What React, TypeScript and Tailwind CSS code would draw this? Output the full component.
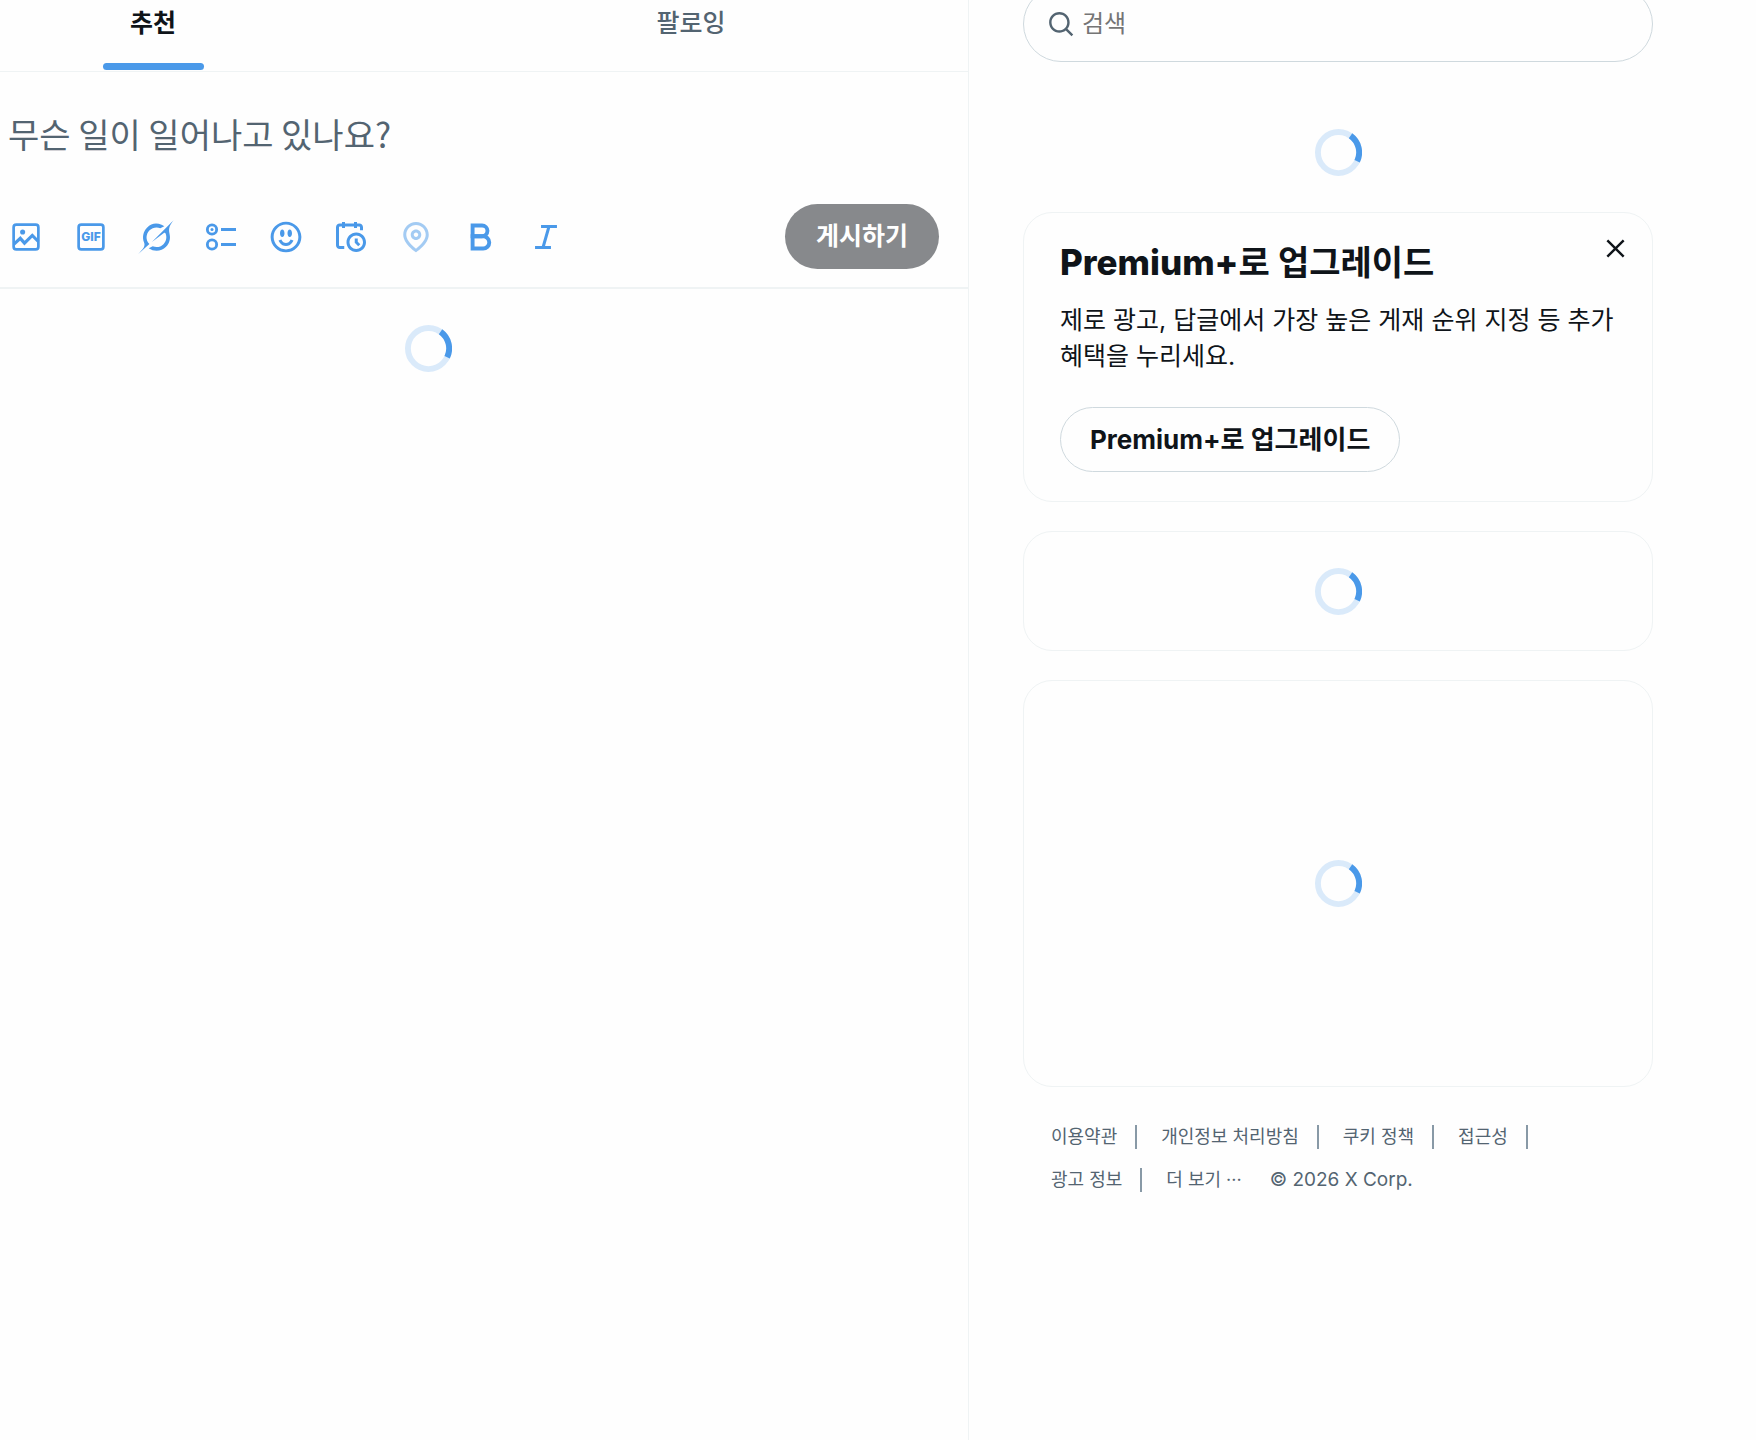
import React, { useState } from "react";

const toolbarIcons = [
  {
    label: "미디어",
    icon: (
      <g fill="none" stroke="currentColor">
        <rect x="3.75" y="3.75" width="16.5" height="16.5" rx="1.8" strokeWidth="1.8" />
        <path d="M4 16.8l4.2-3.9 2.8 3.2 5.2-5.1 4 4" strokeWidth="2.1" />
        <circle cx="9.75" cy="8.7" r="1.7" fill="currentColor" stroke="none" />
      </g>
    ),
  },
  {
    label: "GIF",
    icon: (
      <>
        <rect
          x="3.75"
          y="3.75"
          width="16.5"
          height="16.5"
          rx="1.8"
          fill="none"
          stroke="currentColor"
          strokeWidth="1.8"
        />
        <text x="12" y="14.9" textAnchor="middle" className="text-[8px] font-extrabold">
          GIF
        </text>
      </>
    ),
  },
  {
    label: "Grok",
    icon: (
      <path d="M9.27 15.29l7.978-5.897c.391-.29.95-.177 1.137.272.98 2.369.542 5.215-1.41 7.169-1.951 1.954-4.667 2.382-7.149 1.406l-2.711 1.257c3.889 2.661 8.611 2.003 11.562-.953 2.341-2.344 3.066-5.539 2.388-8.42l.006.007c-.983-4.232.242-5.924 2.75-9.383.06-.082.12-.164.179-.248l-3.301 3.305v-.01L9.267 15.292M7.623 16.723c-2.792-2.67-2.31-6.801.071-9.184 1.761-1.763 4.647-2.483 7.166-1.425l2.705-1.25a7.808 7.808 0 00-1.829-1A8.975 8.975 0 005.984 5.83c-2.533 2.536-3.33 6.436-1.962 9.764 1.022 2.487-.653 4.246-2.34 6.022-.599.63-1.199 1.259-1.682 1.925l7.62-6.815" />
    ),
  },
  {
    label: "투표",
    icon: (
      <g fill="none" stroke="currentColor">
        <circle cx="6" cy="7" r="3.1" strokeWidth="1.9" />
        <circle cx="6" cy="17" r="3.1" strokeWidth="1.9" />
        <circle cx="6" cy="7" r="1" fill="currentColor" stroke="none" />
        <path d="M12 7h10M12 17h10" strokeWidth="2" />
      </g>
    ),
  },
  {
    label: "이모티콘",
    icon: (
      <path d="M8 9.5C8 8.119 8.672 7 9.5 7S11 8.119 11 9.5 10.328 12 9.5 12 8 10.881 8 9.5zm6.5 2.5c.828 0 1.5-1.119 1.5-2.5S15.328 7 14.5 7 13 8.119 13 9.5s.672 2.5 1.5 2.5zM12 16c-2.224 0-3.021-2.227-3.051-2.316l-1.897.633c.05.15 1.271 3.684 4.949 3.684s4.898-3.533 4.949-3.684l-1.896-.638c-.033.095-.83 2.322-3.053 2.322zm10.25-4.001c0 5.652-4.598 10.25-10.25 10.25S1.75 17.652 1.75 12 6.348 1.75 12 1.75 22.25 6.348 22.25 12zm-2 0c0-4.549-3.701-8.25-8.25-8.25S3.75 7.451 3.75 12s3.701 8.25 8.25 8.25 8.25-3.701 8.25-8.25z" />
    ),
  },
  {
    label: "예약",
    icon: (
      <path d="M6 3V2h2v1h6V2h2v1h1.5C18.88 3 20 4.119 20 5.5v2h-2v-2c0-.276-.22-.5-.5-.5H16v1h-2V5H8v1H6V5H4.5c-.28 0-.5.224-.5.5v12c0 .276.22.5.5.5h3v2h-3C3.12 20 2 18.881 2 17.5v-12C2 4.119 3.12 3 4.5 3H6zm9.5 8c-2.49 0-4.5 2.015-4.5 4.5s2.01 4.5 4.5 4.5 4.5-2.015 4.5-4.5-2.01-4.5-4.5-4.5zM9 15.5C9 11.91 11.91 9 15.5 9s6.5 2.91 6.5 6.5-2.91 6.5-6.5 6.5S9 19.09 9 15.5zm5.5-2.5h2v2.086l1.71 1.707-1.42 1.414-2.29-2.293V13z" />
    ),
  },
  {
    label: "위치",
    disabled: true,
    icon: (
      <path d="M12 7c-1.93 0-3.5 1.57-3.5 3.5S10.07 14 12 14s3.5-1.57 3.5-3.5S13.93 7 12 7zm0 5c-.827 0-1.5-.673-1.5-1.5S11.173 9 12 9s1.5.673 1.5 1.5S12.827 12 12 12zm0-10c-4.687 0-8.5 3.813-8.5 8.5 0 5.967 7.621 11.116 7.945 11.332l.555.37.555-.37c.324-.216 7.945-5.365 7.945-11.332C20.5 5.813 16.687 2 12 2zm0 17.77c-1.665-1.241-6.5-5.196-6.5-9.27C5.5 6.916 8.416 4 12 4s6.5 2.916 6.5 6.5c0 4.073-4.835 8.028-6.5 9.27z" />
    ),
  },
  {
    label: "굵게",
    icon: (
      <g fill="none" stroke="currentColor" strokeWidth="2.6">
        <path d="M6.4 4.3h6.3a3.6 3.6 0 0 1 0 7.2H6.4z" />
        <path d="M6.4 11.5h7a4.1 4.1 0 0 1 0 8.2h-7z" />
      </g>
    ),
  },
  {
    label: "기울임꼴",
    icon: (
      <path
        d="M8.7 5h10.6M4.7 19h10.6M14 5l-4 14"
        fill="none"
        stroke="currentColor"
        strokeWidth="2"
      />
    ),
  },
];

const footerLinks = ["이용약관", "개인정보 처리방침", "쿠키 정책", "접근성", "광고 정보"];

function Spinner() {
  return (
    <svg role="progressbar" aria-label="로딩 중" viewBox="0 0 32 32" className="h-[47px] w-[47px]">
      <circle cx="16" cy="16" r="14" fill="none" stroke="#4a99e9" strokeWidth="4" opacity="0.2" />
      {/* about a fifth of the ring */}
      <path
        d="M24.2 4.6A14 14 0 0 1 28.7 22"
        fill="none"
        stroke="#4a99e9"
        strokeWidth="4"
      />
    </svg>
  );
}

function Tabs() {
  const [active, setActive] = useState(0);

  return (
    <nav role="tablist" className="flex h-[71px] -ml-1 mr-2">
      {["추천", "팔로잉"].map((tab, i) => (
        <button
          key={tab}
          role="tab"
          aria-selected={active === i}
          onClick={() => setActive(i)}
          className="flex flex-1 flex-col items-center justify-between pb-px"
        >
          <span
            className={
              active === i
                ? "pt-[5px] text-[25px] leading-9 font-bold text-[#0f1419]"
                : "pt-[5px] text-[25px] leading-9 font-medium text-[#536471]"
            }
          >
            {tab}
          </span>
          {active === i && <span className="h-[7px] w-[101px] rounded-full bg-[#4a99e9]" />}
        </button>
      ))}
    </nav>
  );
}

function Composer() {
  return (
    <form className="border-b-2 border-[#eff3f4] pl-[105px]" onSubmit={(e) => e.preventDefault()}>
      <input
        type="text"
        aria-label="게시물 텍스트"
        placeholder="무슨 일이 일어나고 있나요?"
        className="mt-[34px] block h-[54px] w-full pl-[15px] font-['Noto_Sans_CJK_KR',sans-serif] text-[34px] text-[#0f1419] outline-none placeholder:text-[#536471]"
      />
      <div className="mt-11 flex items-center justify-between pr-[29px] pb-[18px]">
        <div className="flex">
          {toolbarIcons.map((item) => (
            <button
              key={item.label}
              type="button"
              aria-label={item.label}
              disabled={item.disabled}
              className="flex h-[65px] w-[65px] items-center justify-center text-[#4a99e9] disabled:opacity-50"
            >
              <svg viewBox="0 0 24 24" fill="currentColor" className="h-9 w-9">
                {item.icon}
              </svg>
            </button>
          ))}
        </div>
        <button
          type="submit"
          disabled
          className="h-[65px] rounded-full bg-[#87898c] px-[31px] text-[25px] font-bold text-white"
        >
          게시하기
        </button>
      </div>
    </form>
  );
}

function SearchBox() {
  return (
    <label className="-mt-[14px] flex h-[76px] items-center rounded-full border border-[#cfd9de] pl-[23px]">
      <svg viewBox="0 0 24 24" fill="#536471" className="h-[29px] w-[29px]">
        <path d="M10.25 3.75c-3.59 0-6.5 2.91-6.5 6.5s2.91 6.5 6.5 6.5c1.795 0 3.419-.726 4.596-1.904 1.178-1.177 1.904-2.801 1.904-4.596 0-3.59-2.91-6.5-6.5-6.5zm-8.5 6.5c0-4.694 3.806-8.5 8.5-8.5s8.5 3.806 8.5 8.5c0 1.986-.682 3.815-1.824 5.262l4.781 4.781-1.414 1.414-4.781-4.781c-1.447 1.142-3.276 1.824-5.262 1.824-4.694 0-8.5-3.806-8.5-8.5z" />
      </svg>
      <input
        type="search"
        aria-label="검색"
        placeholder="검색"
        className="flex-1 pl-[6px] text-[24px] outline-none placeholder:text-[#757575]"
      />
    </label>
  );
}

function PremiumCard() {
  return (
    <section className="rounded-[29px] border border-[#eff3f4] px-9 pt-7 pb-[29px]">
      <div className="flex items-start justify-between">
        <h2 className="text-[34px] leading-[43px] font-bold">
          <span className="text-[35px] font-extrabold">Premium+</span>로 업그레이드
        </h2>
        <button aria-label="닫기" className="-mr-[14px] -mt-[7px]">
          <svg viewBox="0 0 24 24" fill="currentColor" className="h-[29px] w-[29px]">
            <path d="M10.59 12L4.54 5.96l1.42-1.42L12 10.59l6.04-6.05 1.42 1.42L13.41 12l6.05 6.04-1.42 1.42L12 13.41l-6.04 6.05-1.42-1.42L10.59 12z" />
          </svg>
        </button>
      </div>
      <p className="mt-[18px] text-[25px] leading-9 break-keep">
        제로 광고, 답글에서 가장 높은 게재 순위 지정 등 추가 혜택을 누리세요.
      </p>
      <a
        href="#premium"
        className="mt-[33px] inline-flex h-[65px] items-center rounded-full border border-[#cfd9de] px-[29px] text-[26px] font-bold"
      >
        Premium+로 업그레이드
      </a>
    </section>
  );
}

function Footer() {
  return (
    <footer className="mt-7 flex flex-wrap px-7 text-[18px] leading-[43px] text-[#536471]">
      {footerLinks.map((link) => (
        <span key={link} className="flex items-center">
          <a href="#">{link}</a>
          <span className="mr-6 ml-[18px] h-6 w-[2px] bg-[#8899a6]" />
        </span>
      ))}
      <button className="mr-7">더 보기 ···</button>
      <span className="text-[19px]">© 2026 X Corp.</span>
    </footer>
  );
}

export default function App() {
  return (
    <div className="flex min-h-screen overflow-hidden bg-[#fefefe] font-['Inter','Noto_Sans_CJK_KR',sans-serif] text-[#0f1419]">
      <main className="-ml-[112px] min-w-0 flex-1 border-r border-[#eff3f4]">
        <div className="border-b border-[#eff3f4]">
          <Tabs />
        </div>
        <Composer />
        <div className="flex justify-center pt-9">
          <Spinner />
        </div>
      </main>

      <aside className="mr-[103px] ml-[54px] w-[630px] shrink-0">
        <SearchBox />
        <div className="mt-[30px] flex h-[120px] items-center justify-center">
          <Spinner />
        </div>
        <PremiumCard />
        <section className="mt-[29px] flex h-[120px] items-center justify-center rounded-[29px] border border-[#eff3f4]">
          <Spinner />
        </section>
        <section className="mt-[29px] flex h-[407px] items-center justify-center rounded-[29px] border border-[#eff3f4]">
          <Spinner />
        </section>
        <Footer />
      </aside>
    </div>
  );
}
